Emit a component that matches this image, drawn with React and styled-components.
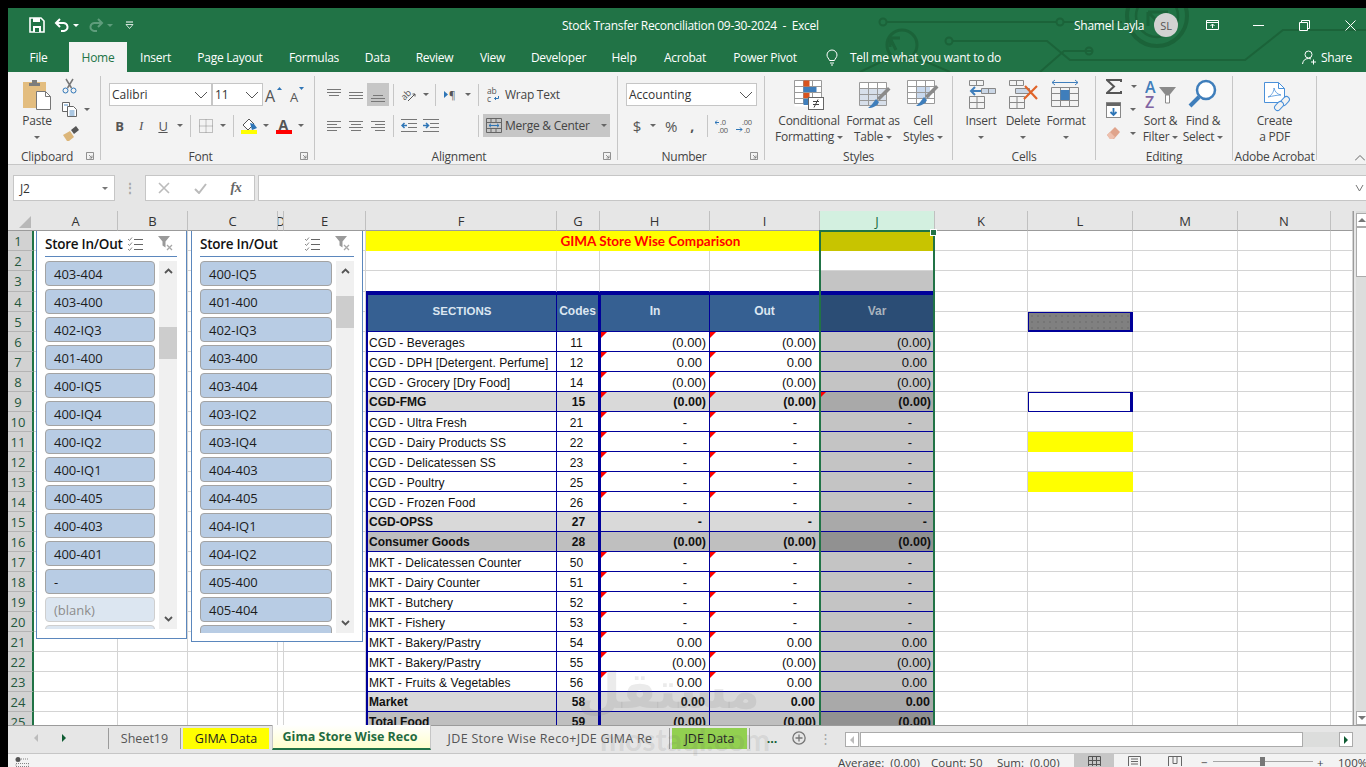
import React from 'react';
import styled, { createGlobalStyle } from 'styled-components';

const UI = '"Open Sans", "Noto Sans", sans-serif';
const CELL = '"Liberation Sans", Arial, sans-serif';
const GREEN = '#217346';
const NAVY = '#000099';

const GlobalStyle = createGlobalStyle`
  html, body {
    margin: 0;
    height: 100%;
    overflow: hidden;
    background: #000;
  }
  #root {
    height: 767px;
  }
`;

const Window = styled.div`
  position: relative;
  box-sizing: border-box;
  display: flex;
  flex-direction: column;
  width: 1366px;
  height: 767px;
  padding: 8px 0 0 8px;
  overflow: hidden;
  font-family: ${UI};
  font-size: 12px;
  letter-spacing: -0.25px;
  color: #444;
`;

/* ---------- title bar ---------- */

const Header = styled.div`
  position: relative;
  height: 64px;
  flex: none;
  background: ${GREEN};
  color: #fff;
`;

const CircuitArt = styled.svg`
  position: absolute;
  left: 0;
  top: 0;
  pointer-events: none;
`;

const TitleRow = styled.div`
  position: relative;
  display: flex;
  align-items: center;
  height: 34px;
`;

const Qat = styled.div`
  display: flex;
  align-items: center;
  flex: none;
  width: 554px;
  padding-left: 21px;
  box-sizing: border-box;
`;

const QatSlot = styled.span`
  display: flex;
  align-items: center;
  justify-content: center;
  gap: 3px;
  width: ${p => p.$w}px;
  margin-left: ${p => p.$ml || 0}px;
`;

const DocTitle = styled.div`
  flex: none;
  width: 512px;
  white-space: pre;
  letter-spacing: -0.3px;
`;

const UserName = styled.div`
  flex: none;
  width: 80px;
`;

const Avatar = styled.div`
  display: flex;
  align-items: center;
  justify-content: center;
  flex: none;
  width: 24px;
  height: 24px;
  border-radius: 50%;
  background: #d2d2d2;
  color: #555;
  font-size: 11px;
`;

const WinButton = styled.span`
  display: flex;
  justify-content: center;
  flex: none;
  width: 46px;
  margin-left: ${p => p.$ml || 0}px;
`;

const TabRow = styled.div`
  position: relative;
  display: flex;
  align-items: stretch;
  height: 30px;
`;

const RibbonTab = styled.div`
  display: flex;
  align-items: center;
  justify-content: center;
  flex: none;
  width: ${p => p.$w}px;
  background: ${p => (p.$active ? '#f3f3f3' : 'transparent')};
  color: ${p => (p.$active ? GREEN : '#fff')};
`;

const TellMe = styled.div`
  display: flex;
  align-items: center;
  flex: none;
  gap: 12px;
  margin-left: 16px;
  width: 476px;
`;

const Share = styled.div`
  display: flex;
  align-items: center;
  gap: 4px;
`;

/* ---------- ribbon ---------- */

const Ribbon = styled.div`
  display: flex;
  flex: none;
  box-sizing: border-box;
  height: 93px;
  background: #f3f3f3;
  border-bottom: 1px solid #c6c6c6;
  color: #444;
`;

const Group = styled.div`
  display: flex;
  flex-direction: column;
  flex: none;
  box-sizing: border-box;
  width: ${p => p.$w}px;
  height: 84px;
  margin-top: 4px;
  border-right: 1px solid #c6c6c6;
`;

const GroupBody = styled.div`
  display: flex;
  flex: none;
  height: 72px;
  padding-left: ${p => p.$pl || 0}px;
  justify-content: ${p => p.$justify || 'flex-start'};
`;

const GroupLabel = styled.div`
  display: flex;
  align-items: center;
  flex: none;
  height: 16px;
  white-space: nowrap;
`;

const LabelText = styled.span`
  flex: 1;
  text-align: center;
`;

const Launcher = styled.span`
  display: flex;
  width: 14px;
  flex: none;
`;

const Stack = styled.div`
  display: flex;
  flex-direction: column;
`;

const ToolRow = styled.div`
  display: flex;
  align-items: center;
  height: 23px;
  margin-top: ${p => p.$mt || 0}px;
`;

const ToolButton = styled.span`
  display: flex;
  align-items: center;
  justify-content: center;
  flex: none;
  width: ${p => p.$w}px;
  height: 23px;
  margin-left: ${p => p.$ml || 0}px;
  background: ${p => (p.$active ? '#c6c6c6' : 'transparent')};
  font-family: ${p => (p.$serif ? '"Liberation Serif", serif' : 'inherit')};
  font-size: ${p => p.$size || 13}px;
  font-weight: ${p => (p.$bold ? 700 : 400)};
  font-style: ${p => (p.$italic ? 'italic' : 'normal')};
  text-decoration: ${p => (p.$under ? 'underline' : 'none')};
  color: #555;
`;

const RowDivider = styled.span`
  flex: none;
  width: 1px;
  height: 22px;
  margin: 0 ${p => p.$r ?? 4}px 0 ${p => p.$l ?? 4}px;
  background: #c6c6c6;
`;

const Caret = styled.span`
  display: inline-block;
  flex: none;
  margin-left: ${p => p.$ml || 0}px;
  border-left: 3px solid transparent;
  border-right: 3px solid transparent;
  border-top: 3px solid ${p => p.$color || '#666'};
`;

const Select = styled.div`
  display: flex;
  align-items: center;
  justify-content: space-between;
  box-sizing: border-box;
  flex: none;
  width: ${p => p.$w}px;
  height: 23px;
  padding: 0 3px 0 2px;
  background: #fff;
  border: 1px solid #c6c6c6;
  color: #333;
  letter-spacing: 0;
`;

const WideTool = styled.div`
  display: flex;
  align-items: center;
  gap: ${p => p.$gap || 5}px;
  box-sizing: border-box;
  width: ${p => p.$w}px;
  height: 23px;
  padding-left: ${p => p.$pl || 4}px;
  background: ${p => (p.$active ? '#c6c6c6' : 'transparent')};
`;

const BigButton = styled.div`
  display: flex;
  flex-direction: column;
  align-items: center;
  flex: none;
  box-sizing: border-box;
  width: ${p => p.$w}px;
  padding-top: 3px;
  line-height: 16px;
  text-align: center;
  white-space: nowrap;
`;

const BigIcon = styled.span`
  display: flex;
  align-items: flex-start;
  justify-content: center;
  box-sizing: border-box;
  height: 34px;
  padding-left: ${p => p.$shift || 0}px;
  padding-top: ${p => p.$drop || 0}px;
`;

const BigLine = styled.span`
  display: flex;
  align-items: center;
  justify-content: center;
  gap: 3px;
  height: 16px;
`;

const SmallColumn = styled.div`
  display: flex;
  flex-direction: column;
  gap: 3.5px;
  width: ${p => p.$w}px;
  flex: none;
  margin-left: ${p => p.$ml || 0}px;
  padding-left: ${p => p.$pl || 0}px;
  box-sizing: border-box;
`;

const SmallItem = styled.span`
  display: flex;
  align-items: center;
  gap: ${p => p.$gap || 6}px;
  height: 20px;
`;

const RibbonEnd = styled.div`
  flex: 1;
  display: flex;
  align-items: flex-end;
  justify-content: flex-end;
  padding: 0 1px 3px 0;
`;

/* ---------- formula bar ---------- */

const FormulaBar = styled.div`
  display: flex;
  flex: none;
  align-items: center;
  height: 46px;
  padding-left: 5px;
  background: #e6e6e6;
`;

const NameBox = styled.div`
  display: flex;
  align-items: center;
  justify-content: space-between;
  box-sizing: border-box;
  width: 102px;
  height: 26px;
  padding: 0 6px;
  background: #fff;
  border: 1px solid #c6c6c6;
  color: #333;
`;

const Grip = styled.span`
  width: 30px;
  text-align: center;
  color: #a6a6a6;
  font-weight: 700;
  line-height: 1;
`;

const FormulaButtons = styled.div`
  display: flex;
  align-items: center;
  box-sizing: border-box;
  width: 110px;
  height: 26px;
  background: #fff;
  border: 1px solid #c6c6c6;
`;

const FormulaSlot = styled.span`
  display: flex;
  justify-content: center;
  width: 36px;
  color: #666;
  font-family: "Liberation Serif", serif;
  font-style: italic;
  font-weight: 700;
  font-size: 14px;
`;

const FormulaInput = styled.div`
  display: flex;
  align-items: center;
  justify-content: flex-end;
  box-sizing: border-box;
  flex: 1;
  height: 26px;
  margin-left: 3px;
  padding-right: 2px;
  background: #fff;
  border: 1px solid #c6c6c6;
  border-right: 0;
`;

/* ---------- sheet ---------- */

const Sheet = styled.div`
  position: relative;
  display: flex;
  flex: none;
  height: 514px;
  background: #e6e6e6;
`;

const SheetGrid = styled.div`
  display: grid;
  grid-template-columns: 26px ${p => p.$cols};
  grid-template-rows: 20px 20px 20px 21px repeat(22, 20px);
  flex: none;
  width: 1345px;
  height: 514px;
  overflow: hidden;
  background: #fff;
  border-right: 1px solid #9b9b9b;
  box-sizing: content-box;
`;

const Corner = styled.div`
  position: relative;
  background: #e6e6e6;
  border-bottom: 1px solid #9b9b9b;
  &::after {
    content: '';
    position: absolute;
    right: 3px;
    bottom: 2px;
    border-left: 12px solid transparent;
    border-bottom: 12px solid #b8b8b8;
  }
`;

const ColHead = styled.div`
  display: flex;
  align-items: center;
  justify-content: center;
  box-sizing: border-box;
  overflow: hidden;
  background: ${p => (p.$selected ? '#d3f0e0' : '#e6e6e6')};
  color: ${p => (p.$selected ? '#1b6b40' : '#333')};
  border-right: 1px solid #c0c0c0;
  border-bottom: 1px solid #9b9b9b;
  font-size: 13px;
  letter-spacing: 0;
`;

const RowHead = styled.div`
  display: flex;
  align-items: center;
  justify-content: center;
  box-sizing: border-box;
  padding-right: 4px;
  background: #d2d2d2;
  color: #24573c;
  border-right: 2px solid ${GREEN};
  border-bottom: 1px solid #b4b4b4;
  font-size: 13px;
  letter-spacing: 0;
`;

const Cell = styled.div`
  position: relative;
  display: flex;
  align-items: center;
  justify-content: ${p => p.$align || 'flex-start'};
  box-sizing: border-box;
  min-width: 0;
  overflow: hidden;
  white-space: nowrap;
  padding: ${p => p.$pad || 0};
  background: ${p => p.$bg || '#fff'};
  border-top: ${p => p.$top || 0};
  border-left: ${p => p.$left || 0};
  border-right: ${p => p.$right || '1px solid #d4d4d4'};
  border-bottom: ${p => p.$bottom || '1px solid #d4d4d4'};
  grid-column: ${p => (p.$colSpan ? `span ${p.$colSpan}` : 'auto')};
  grid-row: ${p => (p.$rowSpan ? `span ${p.$rowSpan}` : 'auto')};
  color: ${p => p.$color || '#111'};
  font-family: ${CELL};
  font-size: ${p => p.$size || 12}px;
  font-weight: ${p => (p.$bold ? 700 : 400)};
  letter-spacing: ${p => p.$track || 0}px;
`;

const MergedTitle = styled(Cell)`
  font-family: Lato, ${CELL};
  font-size: 13.5px;
  color: #ff0000;
`;

const CommentMark = styled.span`
  position: absolute;
  left: 0;
  top: 0;
  border-top: 6px solid #ff0000;
  border-right: 6px solid transparent;
`;

const Selection = styled.div`
  position: absolute;
  left: 811px;
  top: 19px;
  width: 116px;
  height: 495px;
  box-sizing: border-box;
  border: 2px solid ${GREEN};
  border-bottom: 0;
  pointer-events: none;
  &::after {
    content: '';
    position: absolute;
    right: -4px;
    top: -3px;
    width: 5px;
    height: 5px;
    background: ${GREEN};
    border: 1px solid #fff;
  }
`;

const VScroll = styled.div`
  display: flex;
  flex-direction: column;
  flex: none;
  box-sizing: border-box;
  width: 11px;
  height: 514px;
  margin-left: 2px;
  padding-top: 2px;
  background: #dcdddc;
`;

const ScrollArrow = styled.div`
  display: flex;
  align-items: center;
  justify-content: center;
  box-sizing: border-box;
  height: 14px;
  flex: none;
  background: #fff;
  border: 1px solid #ababab;
  margin-top: ${p => p.$mt || 0}px;
`;

const VThumb = styled.div`
  height: 50px;
  flex: none;
  box-sizing: border-box;
  background: #fff;
  border: 1px solid #ababab;
`;

const Triangle = styled.span`
  border-left: 4px solid transparent;
  border-right: 4px solid transparent;
  border-${p => (p.$up ? 'bottom' : 'top')}: 4px solid #777;
`;

/* ---------- slicers ---------- */

const Slicer = styled.div`
  position: absolute;
  left: ${p => p.$left}px;
  top: 20px;
  box-sizing: border-box;
  width: ${p => p.$w}px;
  height: ${p => p.$h}px;
  padding: 0 ${p => p.$pr}px 0 8px;
  background: #fff;
  border: 1px solid #5b87bd;
  border-top: 0;
`;

const SlicerHead = styled.div`
  display: flex;
  align-items: center;
  box-sizing: border-box;
  height: 26px;
  border-bottom: 1px solid #5b87bd;
`;

const SlicerTitle = styled.span`
  flex: none;
  width: ${p => p.$w}px;
  font-size: 13.5px;
  font-weight: 600;
  color: #111;
  white-space: nowrap;
`;

const SlicerTool = styled.span`
  display: flex;
  width: ${p => p.$w}px;
`;

const SlicerBody = styled.div`
  display: flex;
  gap: 4px;
  height: ${p => p.$h}px;
  margin-top: 4px;
`;

const ItemList = styled.div`
  display: flex;
  flex-direction: column;
  gap: 3px;
  flex: 1;
  overflow: hidden;
`;

const SlicerItem = styled.div`
  display: flex;
  align-items: center;
  flex: none;
  box-sizing: border-box;
  height: 25px;
  padding-left: 8px;
  background: ${p => (p.$dim ? '#dce6f1' : '#b8cce4')};
  border: 1px solid ${p => (p.$dim ? '#cfcfcf' : '#a3a3a3')};
  border-radius: 4px;
  color: ${p => (p.$dim ? '#8c8c8c' : '#1c1c1c')};
  font-size: 13px;
  letter-spacing: 0;
`;

const Track = styled.div`
  display: flex;
  flex-direction: column;
  align-items: center;
  flex: none;
  width: 18px;
  background: #f0f0f0;
`;

const TrackChevron = styled.span`
  display: flex;
  align-items: center;
  justify-content: center;
  flex: none;
  height: 20px;
`;

const TrackGap = styled.span`
  flex: ${p => (p.$h ? 'none' : 1)};
  height: ${p => p.$h || 0}px;
`;

const TrackThumb = styled.span`
  flex: none;
  width: 100%;
  height: 32px;
  background: #cdcdcd;
`;

/* ---------- bottom bars ---------- */

const TabsBar = styled.div`
  display: flex;
  align-items: flex-start;
  flex: none;
  box-sizing: border-box;
  height: 28px;
  background: #e6e6e6;
  border-top: 1px solid #9b9b9b;
  font-size: 12.5px;
  letter-spacing: 0;
`;

const NavArrows = styled.div`
  display: flex;
  align-items: center;
  flex: none;
  height: 24px;
  width: 100px;
  padding-left: 26px;
  gap: 24px;
  box-sizing: border-box;
`;

const NavArrow = styled.span`
  border-top: 4px solid transparent;
  border-bottom: 4px solid transparent;
  border-left: ${p => (p.$right ? `4px solid #0f5c33` : 0)};
  border-right: ${p => (p.$right ? 0 : '4px solid #bcbcbc')};
`;

const TabDivider = styled.span`
  flex: none;
  width: 1px;
  height: 21px;
  margin: 2px ${p => p.$mr ?? 2}px 0 ${p => p.$ml ?? 0}px;
  background: ${p => (p.$clear ? 'transparent' : '#9b9b9b')};
`;

const SheetTab = styled.div`
  display: flex;
  align-items: center;
  justify-content: center;
  flex: none;
  box-sizing: border-box;
  width: ${p => p.$w}px;
  height: ${p => (p.$active ? 25 : 21)}px;
  margin-top: ${p => (p.$active ? -1 : 2)}px;
  padding-right: ${p => (p.$active ? 3 : 0)}px;
  background: ${p => p.$bg || 'transparent'};
  color: ${p => (p.$active ? '#1f6b41' : p.$plain ? '#555' : '#222')};
  font-weight: ${p => (p.$active ? 700 : 400)};
  letter-spacing: ${p => p.$track || 0}px;
  border-left: ${p => (p.$active ? '1px solid #c6c6c6' : 0)};
  border-right: ${p => (p.$active ? '1px solid #c6c6c6' : 0)};
  border-bottom: ${p => (p.$active ? `2px solid ${GREEN}` : 0)};
  white-space: nowrap;
  overflow: hidden;
`;

const TabExtra = styled.span`
  display: flex;
  justify-content: center;
  align-items: center;
  flex: none;
  height: 24px;
  width: ${p => p.$w}px;
  color: ${p => p.$color || '#666'};
  font-weight: ${p => (p.$bold ? 700 : 400)};
`;

const HScroll = styled.div`
  display: flex;
  flex: none;
  width: 508px;
  height: 15px;
  margin-top: 6px;
  background: #dcdddc;
`;

const HArrow = styled.span`
  display: flex;
  align-items: center;
  justify-content: center;
  box-sizing: border-box;
  width: ${p => p.$w}px;
  flex: none;
  background: #fff;
  border: 1px solid #ababab;
`;

const HThumb = styled.span`
  flex: none;
  box-sizing: border-box;
  width: 443px;
  margin-left: 1px;
  background: #fff;
  border: 1px solid #ababab;
`;

const HTrack = styled.span`
  flex: 1;
`;

const StatusBar = styled.div`
  display: flex;
  align-items: flex-start;
  flex: none;
  box-sizing: border-box;
  height: 14px;
  background: #f3f3f3;
  border-top: 1px solid #c6c6c6;
  font-size: 11.5px;
  letter-spacing: 0;
  line-height: 18px;
  white-space: pre;
`;

const StatusText = styled.span`
  flex: none;
  width: ${p => p.$w}px;
  margin-left: ${p => p.$ml || 0}px;
`;

const MacroSlot = styled.span`
  display: flex;
  flex: none;
  width: 823px;
  margin-left: 7px;
  padding-top: 3px;
`;

const ViewButton = styled.span`
  display: flex;
  justify-content: center;
  padding-top: 2px;
  flex: none;
  width: ${p => p.$w}px;
  height: 14px;
  background: ${p => (p.$active ? '#c6c6c6' : 'transparent')};
`;

const ZoomTrack = styled.span`
  position: relative;
  flex: none;
  width: 100px;
  height: 1px;
  margin: 7px 4px 0 2px;
  background: #a6a6a6;
`;

const ZoomThumb = styled.span`
  position: absolute;
  left: 47px;
  top: -4px;
  width: 5px;
  height: 9px;
  background: #777;
`;

const Watermark = styled.div`
  position: absolute;
  left: 590px;
  top: 660px;
  width: 190px;
  text-align: center;
  color: rgba(110, 110, 110, 0.14);
  pointer-events: none;
  letter-spacing: 0;
`;

const WatermarkAr = styled.div`
  padding-right: 20px;
  font-family: "DejaVu Sans", sans-serif;
  font-weight: 700;
  font-size: 50px;
  line-height: 62px;
`;

const WatermarkEn = styled.div`
  font-family: Lato, sans-serif;
  font-weight: 700;
  font-size: 30px;
  line-height: 34px;
`;

/* ---------- icons ---------- */

const Svg = ({ w, h, children }) => (
  <svg width={w} height={h} viewBox={`0 0 ${w} ${h}`} fill="none">
    {children}
  </svg>
);

const Circuit = () => (
  <CircuitArt width="1358" height="64" viewBox="8 8 1358 64" fill="none" stroke="#1b6339" strokeWidth="2">
    <circle cx="883" cy="22" r="3.5" />
    <path d="M887 22H1056M1064 22H1122" />
    <circle cx="1060" cy="22" r="3.5" />
    <circle cx="902" cy="45" r="15" strokeWidth="3" />
    <path d="M896 50l-6-12M890 38h10M890 38v9" strokeWidth="3" />
    <path d="M953 41H1047L1070 60H1245L1283 30H1366" />
    <circle cx="949" cy="41" r="3.5" />
    <circle cx="1089" cy="51" r="3.5" />
    <circle cx="1157" cy="16" r="30" strokeWidth="4" />
    <circle cx="1157" cy="16" r="21" strokeWidth="2.5" />
    <path d="M1148 12h20M1148 12v14M1148 12l16 16" strokeWidth="3" />
    <path d="M1092 51h-28L1040 72M950 72l-28-12H885M860 72l25-12" />
  </CircuitArt>
);

const SaveIcon = () => (
  <Svg w={16} h={16}>
    <path d="M1 1h11l3 3v11H1z" stroke="#fff" strokeWidth="1.6" />
    <path d="M4 1h7v4H4zM4 9h8v6H4z" fill="#fff" />
    <path d="M6 11h4v4H6z" fill={GREEN} />
  </Svg>
);

const UndoIcon = ({ color, flip }) => (
  <svg width="16" height="14" viewBox="0 0 16 14" fill="none" transform={flip ? 'scale(-1 1)' : undefined}>
    <path d="M6 1L2 5l4 4" stroke={color} strokeWidth="2" />
    <path d="M2 5h7a4 4 0 0 1 1 8H7" stroke={color} strokeWidth="2" />
  </svg>
);

const CustomizeIcon = () => (
  <Svg w={9} h={8}>
    <path d="M1 1h7" stroke="#fff" />
    <path d="M1 3.5h7L4.5 7.5z" stroke="#fff" strokeWidth=".8" />
  </Svg>
);

const DisplayIcon = () => (
  <Svg w={13} h={10}>
    <path d="M.5.5h12v9H.5zM.5 2.5h12M6.5 8V4M4.5 6l2-2 2 2" stroke="#fff" />
  </Svg>
);

const MinIcon = () => <Svg w={11} h={11}><path d="M0 5.5h11" stroke="#fff" /></Svg>;
const RestoreIcon = () => (
  <Svg w={11} h={11}>
    <path d="M.5 2.5h8v8h-8zM2.5 2.5v-2h8v8h-2" stroke="#fff" />
  </Svg>
);
const CloseIcon = () => <Svg w={11} h={11}><path d="M.5.5l10 10M10.5.5l-10 10" stroke="#fff" /></Svg>;

const BulbIcon = () => (
  <Svg w={12} h={17}>
    <path d="M3.5 11.5C3 9.5 1 8.5 1 6a5 5 0 0 1 10 0c0 2.5-2 3.5-2.5 5.5zM4 14h4M5 16h2" stroke="#fff" />
  </Svg>
);

const ShareIcon = () => (
  <Svg w={15} h={15}>
    <circle cx="6.5" cy="4.5" r="3.5" stroke="#fff" />
    <path d="M.5 14c.5-3.5 2.5-5.5 6-5.5 1 0 2 .2 2.5.5M11.5 9.5v5M9 12h5" stroke="#fff" />
  </Svg>
);

const PasteIcon = () => (
  <Svg w={30} h={31}>
    <rect x="1" y="3" width="23" height="26" fill="#e3bd7f" />
    <path d="M7 4h11v3H7z" fill="#7c7c7c" />
    <path d="M10 1h5v3h-5z" fill="#7c7c7c" />
    <path d="M14.5 12.5h9l5 5v13h-14z" fill="#fff" stroke="#777" />
    <path d="M23.5 12.5v5h5" stroke="#777" />
  </Svg>
);

const CutIcon = () => (
  <Svg w={15} h={16}>
    <path d="M4 1l5.5 9M11 1L5.5 10" stroke="#777" strokeWidth="1.5" />
    <circle cx="3.5" cy="12.5" r="2.5" stroke="#2e75b6" />
    <circle cx="11.5" cy="12.5" r="2.5" stroke="#2e75b6" />
  </Svg>
);

const CopyIcon = () => (
  <Svg w={16} h={15}>
    <path d="M.5.5h7v9h-7z" fill="#fff" stroke="#666" />
    <path d="M5.5 4.5h6l3 3v7h-9z" fill="#fff" stroke="#666" />
    <path d="M7.5 9h5M7.5 11h5M7.5 13h5M2 3h4" stroke="#2e75b6" strokeWidth=".8" />
  </Svg>
);

const PainterIcon = () => (
  <Svg w={17} h={15}>
    <path d="M1 9l7-4 4 6-5 4H5z" fill="#dcb67a" />
    <path d="M9 4l5-4 3 4-5 4z" fill="#555" />
  </Svg>
);

const LauncherIcon = () => (
  <Svg w={8} h={8}>
    <path d="M.5 7.5v-7h7v7zM3 3l3 3M6 3.5V6H3.5" stroke="#777" strokeWidth=".8" />
  </Svg>
);

const ChevronDown = ({ color = '#555', w = 14 }) => (
  <Svg w={w} h={8}>
    <path d={`M1 1l${(w - 2) / 2} 6 ${(w - 2) / 2}-6`} stroke={color} />
  </Svg>
);

const SizeA = ({ size, up }) => (
  <Svg w={20} h={20}>
    <text x={up ? 1 : 4} y="17" fontFamily={UI} fontSize={size} fill="#555">A</text>
    <path d={up ? 'M13 5h5l-2.5-3z' : 'M13 2h5l-2.5 3z'} fill="#2e75b6" />
  </Svg>
);

const BorderIcon = () => (
  <Svg w={14} h={14}>
    <path d="M.5.5h13v13H.5zM7 .5v13M.5 7h13" stroke="#888" strokeDasharray="1 1" />
  </Svg>
);

const FillColorIcon = () => (
  <Svg w={18} h={18}>
    <path d="M8 2L2 8l5 5 6-6z" fill="#fff" stroke="#555" />
    <path d="M9 6l4 1 3 4-5 2z" fill="#2e75b6" />
    <rect y="13" width="16" height="4" fill="#ffff00" />
  </Svg>
);

const FontColorIcon = () => (
  <Svg w={16} h={18}>
    <text x="2.5" y="12.5" fontFamily={UI} fontSize="14" fontWeight="700" fill="#555">A</text>
    <rect y="13" width="16" height="4" fill="#ff0000" />
  </Svg>
);

const lineSets = {
  top: [[0, 14, 2], [0, 14, 5], [2, 12, 8]],
  middle: [[0, 14, 5], [0, 14, 8], [0, 14, 11]],
  bottom: [[2, 12, 8], [0, 14, 11], [0, 14, 14]],
  left: [[0, 14, 3], [0, 10, 6], [0, 14, 9], [0, 10, 12]],
  center: [[0, 14, 3], [2, 12, 6], [0, 14, 9], [2, 12, 12]],
  right: [[0, 14, 3], [4, 14, 6], [0, 14, 9], [4, 14, 12]],
};

const LinesIcon = ({ kind }) => (
  <Svg w={14} h={16}>
    {lineSets[kind].map(([a, b, y]) => (
      <path key={y} d={`M${a} ${y + 0.5}H${b}`} stroke="#777" />
    ))}
  </Svg>
);

const OrientationIcon = () => (
  <Svg w={16} h={16}>
    <text x="0" y="11" fontFamily={UI} fontSize="9" fill="#555" transform="rotate(-45 5 8)">ab</text>
    <path d="M7 14L14 7M11.5 7H14v2.5" stroke="#555" />
  </Svg>
);

const RtlIcon = () => (
  <Svg w={14} h={12}>
    <path d="M0 2l4 3.5L0 9z" fill="#2e75b6" />
    <text x="5" y="10" fontFamily={UI} fontSize="10" fill="#555">¶</text>
  </Svg>
);

const IndentIcon = ({ right }) => (
  <Svg w={16} h={14}>
    <path d="M0 .5h16M7 4.5h9M7 8.5h9M0 12.5h16" stroke="#777" />
    <path d={right ? 'M0 6.5h5M3 4l2.5 2.5L3 9' : 'M6 6.5H1M3.5 4L1 6.5 3.5 9'} stroke="#2e75b6" strokeWidth="1.5" />
  </Svg>
);

const WrapIcon = () => (
  <Svg w={13} h={15}>
    <text x="0" y="7" fontFamily={UI} fontSize="8.5" fill="#555">ab</text>
    <text x="0" y="15" fontFamily={UI} fontSize="8.5" fill="#555">c</text>
    <path d="M11.5 9v2.5H7.5M9 10l-1.5 1.5L9 13" stroke="#2e75b6" />
  </Svg>
);

const MergeIcon = () => (
  <Svg w={16} h={15}>
    <path d="M.5.5h15v14H.5zM.5 4.5h15M.5 10.5h15M5 .5v4M10 .5v4M5 10.5v4M10 10.5v4" stroke="#666" />
    <path d="M3 7.5h10M5 5.8L3 7.5l2 1.7M11 5.8l2 1.7-2 1.7" stroke="#2e75b6" />
  </Svg>
);

const DecimalIcon = ({ more }) => (
  <Svg w={17} h={14}>
    <text x={more ? 6 : 5} y="6" fontFamily={UI} fontSize="7.5" fill="#555">{more ? '.00' : '.0'}</text>
    <text x={more ? 8 : 3} y="13.5" fontFamily={UI} fontSize="7.5" fill="#555">{more ? '.0' : '.00'}</text>
    {more ? (
      <path d="M0 10.5h6M4 8.5l2 2-2 2" stroke="#2e75b6" />
    ) : (
      <path d="M4 3.5H0M2 1.5l-2 2 2 2" stroke="#2e75b6" />
    )}
  </Svg>
);

const TableGrid = () => (
  <path d="M.5.5h27v23H.5zM9.5.5v23M18.5.5v23M.5 6.5h27M.5 12.5h27M.5 18.5h27" stroke="#999" />
);

const ConditionalIcon = () => (
  <Svg w={30} h={30}>
    <rect x=".5" y=".5" width="27" height="26" fill="#fff" />
    <TableGrid />
    <rect x="9.5" y=".5" width="6" height="6" fill="#d9541e" />
    <rect x="9.5" y="7" width="13" height="5" fill="#3f7ebb" />
    <rect x="9.5" y="13" width="6" height="5" fill="#d9541e" />
    <rect x="9.5" y="19" width="6" height="6" fill="#3f7ebb" />
    <rect x="14.5" y="17.5" width="15" height="12" fill="#fff" stroke="#666" />
    <path d="M19 21.5h6M19 24.5h6M24 19.5l-4 8" stroke="#444" />
  </Svg>
);

const TableBrushIcon = ({ cell }) => (
  <Svg w={32} h={28}>
    <rect x=".5" y=".5" width="27" height="23" fill="#fff" />
    <rect x={cell ? 9 : 1} y={cell ? 6 : 6} width={cell ? 14 : 26} height={cell ? 12 : 17} fill={cell ? '#c9d9ee' : '#d7dfea'} />
    <TableGrid />
    <path d="M29 5l2.500 2.500-11 11-2.500-2.500z" fill="#8a8a8a" />
    <path d="M17 17l3 3c-2 4-6 6-11 6 3-2 5-5 8-9z" fill="#3f7ebb" />
  </Svg>
);

const InsertIcon = () => (
  <Svg w={28} h={30}>
    <path d="M.5.5h14v5H.5zM7.5.5v5M.5 16.5h15v12H.5zM8 16.5v12M.5 22.5h15" stroke="#888" />
    <path d="M12 11H2M6 7l-4 4 4 4" stroke="#3f7ebb" strokeWidth="2" />
    <path d="M12.5 8.5h14v5h-14zM19.5 8.5v5" fill="#cbd7e6" stroke="#888" />
  </Svg>
);

const DeleteIcon = () => (
  <Svg w={32} h={30}>
    <path d="M.5.5h14v5H.5zM7.5.5v5M.5 16.5h15v12H.5zM8 16.5v12M.5 22.5h15" stroke="#888" />
    <path d="M6.5 8.5h14v5h-14z" fill="#cbd7e6" stroke="#888" />
    <path d="M16 6l12 13M28 6L15 19" stroke="#e0642a" strokeWidth="2.2" />
  </Svg>
);

const FormatIcon = () => (
  <Svg w={30} h={30}>
    <path d="M1 3.5h26M4 1L1 3.5 4 6M24 1l3 2.5L24 6" stroke="#3f7ebb" />
    <path d="M.5 8.5h27v19h-27zM9.5 8.5v19M18.5 8.5v19M.5 14.5h27M.5 21.5h27" stroke="#888" />
    <rect x="9.5" y="11" width="9" height="10" fill="#3f7ebb" />
  </Svg>
);

const SigmaIcon = () => (
  <Svg w={16} h={15}>
    <path d="M15 3V1H1l7 6.5L1 14h14v-2" stroke="#555" strokeWidth="2" />
  </Svg>
);

const FillDownIcon = () => (
  <Svg w={15} h={16}>
    <rect x=".5" y=".5" width="14" height="15" fill="#fff" stroke="#888" />
    <path d="M.5 1h14v3H.5z" fill="#666" />
    <path d="M7.5 6v7M4.5 10l3 3 3-3" stroke="#2e75b6" strokeWidth="1.8" />
  </Svg>
);

const EraserIcon = () => (
  <Svg w={15} h={14}>
    <path d="M1 9l8-8 5 5-6 7H4z" fill="#e0a48c" />
    <path d="M1 9l3-3 5 5-2 2H4z" fill="#eec0ae" />
  </Svg>
);

const SortFilterIcon = () => (
  <Svg w={32} h={30}>
    <text x="0" y="14" fontFamily={UI} fontSize="16" fontWeight="600" fill="#3f7ebb">A</text>
    <text x="0" y="29" fontFamily={UI} fontSize="16" fontWeight="600" fill="#8064a2">Z</text>
    <path d="M14 8h17l-6.5 8v8h-4v-8z" fill="#8a8a8a" />
    <path d="M20.5 16h4v8h-4z" fill="#fff" stroke="#8a8a8a" />
  </Svg>
);

const FindIcon = () => (
  <Svg w={30} h={30}>
    <circle cx="18" cy="11" r="9" fill="#fff" stroke="#3f7ebb" strokeWidth="2.5" />
    <path d="M11 18L2 27" stroke="#3f7ebb" strokeWidth="4" />
  </Svg>
);

const PdfIcon = () => (
  <Svg w={28} h={30}>
    <path d="M.5.5h14l6 6v14h-20z" fill="#fff" stroke="#4a90d9" />
    <path d="M14.5.5v6h6" stroke="#4a90d9" />
    <path d="M4 15c3-1 6-5 6-9 1 4 3 6 7 7-4 0-8 1-13 2z" stroke="#4a90d9" strokeWidth=".8" />
    <rect x="18" y="14" width="6" height="10" rx="3" transform="rotate(45 21 19)" fill="#f3f3f3" stroke="#4a90d9" />
    <rect x="12" y="19" width="6" height="10" rx="3" transform="rotate(45 15 24)" fill="#f3f3f3" stroke="#4a90d9" />
  </Svg>
);

const MultiSelectIcon = () => (
  <Svg w={16} h={14}>
    <path d="M1 2l1.5 1.5L5 .5M1 7l1.5 1.5L5 5.5M1 12l1.5 1.5L5 10.5" stroke="#888" />
    <path d="M7 2.5h9M7 7.5h9M7 12.5h9" stroke="#666" />
  </Svg>
);

const ClearFilterIcon = () => (
  <Svg w={16} h={15}>
    <path d="M0 0h12L7.5 5.5v6l-3-2V5.5z" fill="#9a9a9a" />
    <path d="M9 9l5 5M14 9l-5 5" stroke="#a8a8a8" strokeWidth="1.3" />
  </Svg>
);

const TrackArrow = ({ down }) => (
  <Svg w={9} h={6}>
    <path d={down ? 'M1 1l3.5 3.5L8 1' : 'M1 5l3.5-3.5L8 5'} stroke="#555" strokeWidth="1.8" />
  </Svg>
);

const CrossIcon = () => <Svg w={12} h={12}><path d="M1 1l10 10M11 1L1 11" stroke="#bbb" strokeWidth="1.6" /></Svg>;
const CheckIcon = () => <Svg w={13} h={11}><path d="M1 6l4 4 7-9" stroke="#bbb" strokeWidth="2" /></Svg>;

const MacroIcon = () => (
  <Svg w={14} h={10}>
    <circle cx="3" cy="2.5" r="2.5" fill="#555" />
    <path d="M6 2h8M1 6.5h13v3H1z" stroke="#666" strokeWidth=".8" strokeDasharray="1 1" />
  </Svg>
);

const NormalViewIcon = () => <Svg w={13} h={10}><path d="M.5.5h12v12H.5zM4.5.5v12M8.5.5v12M.5 4.5h12M.5 8.5h12" stroke="#555" /></Svg>;
const PageViewIcon = () => <Svg w={13} h={10}><path d="M.5.5h12v12H.5zM3 3h7M3 5.5h7M3 8h7" stroke="#666" /></Svg>;
const BreakViewIcon = () => <Svg w={14} h={10}><path d="M.5.5h13v12H.5zM5 .5v7h4v-7" stroke="#666" /></Svg>;

const PlusCircleIcon = () => (
  <Svg w={16} h={16}>
    <circle cx="8" cy="8" r="7" stroke="#777" strokeWidth="1.5" />
    <path d="M4 8h8M8 4v8" stroke="#777" strokeWidth="1.5" />
  </Svg>
);

/* ---------- data ---------- */

const menuTabs = [
  ['File', 61], ['Home', 58], ['Insert', 57], ['Page Layout', 92], ['Formulas', 76], ['Data', 51],
  ['Review', 63], ['View', 53], ['Developer', 79], ['Help', 52], ['Acrobat', 70], ['Power Pivot', 90],
];

const columns = [
  ['A', 84], ['B', 70], ['C', 90], ['D', 6], ['E', 82], ['F', 191], ['G', 43], ['H', 110],
  ['I', 110], ['J', 115], ['K', 93], ['L', 105], ['M', 105], ['N', 93], ['', 22],
];

const storeOne = ['403-404', '403-400', '402-IQ3', '401-400', '400-IQ5', '400-IQ4', '400-IQ2', '400-IQ1', '400-405', '400-403', '400-401', '-'];
const storeTwo = ['400-IQ5', '401-400', '402-IQ3', '403-400', '403-404', '403-IQ2', '403-IQ4', '404-403', '404-405', '404-IQ1', '404-IQ2', '405-400', '405-404', ''];

// row: label, code, value kind, tone
const tableRows = {
  6: ['CGD - Beverages', 11, 'neg', 'plain'],
  7: ['CGD - DPH [Detergent. Perfume]', 12, 'pos', 'plain'],
  8: ['CGD - Grocery [Dry Food]', 14, 'neg', 'plain'],
  9: ['CGD-FMG', 15, 'neg', 'light'],
  10: ['CGD - Ultra Fresh', 21, 'dash', 'plain'],
  11: ['CGD - Dairy Products SS', 22, 'dash', 'plain'],
  12: ['CGD - Delicatessen SS', 23, 'dash', 'plain'],
  13: ['CGD - Poultry', 25, 'dash', 'plain'],
  14: ['CGD - Frozen Food', 26, 'dash', 'plain'],
  15: ['CGD-OPSS', 27, 'dash', 'light'],
  16: ['Consumer Goods', 28, 'neg', 'mid'],
  17: ['MKT - Delicatessen Counter', 50, 'dash', 'plain'],
  18: ['MKT - Dairy Counter', 51, 'dash', 'plain'],
  19: ['MKT - Butchery', 52, 'dash', 'plain'],
  20: ['MKT - Fishery', 53, 'dash', 'plain'],
  21: ['MKT - Bakery/Pastry', 54, 'pos', 'plain'],
  22: ['MKT - Bakery/Pastry', 55, 'neg', 'plain'],
  23: ['MKT - Fruits & Vegetables', 56, 'pos', 'plain'],
  24: ['Market', 58, 'pos', 'light'],
  25: ['Total Food', 59, 'neg', 'mid'],
};

const tones = {
  plain: { bg: '#fff', sel: '#c4c4c4' },
  light: { bg: '#d9d9d9', sel: '#a9a9a9' },
  mid: { bg: '#bfbfbf', sel: '#919191' },
};

const valueText = { neg: '(0.00)', pos: '0.00', dash: '-' };
const thin = `1px solid ${NAVY}`;

const valuePad = (kind, bold) => {
  const top = bold ? 0 : 2;
  if (kind === 'neg') return `${top}px 3px 0 0`;
  if (kind === 'pos') return `${top}px ${bold ? 4 : 7}px 0 0`;
  return `${top}px ${bold ? 7 : 22}px 0 0`;
};

const tableRowCells = r => {
  const [label, code, kind, tone] = tableRows[r];
  const { bg, sel } = tones[tone];
  const bold = tone !== 'plain';
  const marked = tone === 'plain' || r === 9;
  const pad = valuePad(kind, bold);
  const size = bold ? 12.5 : 13;
  return [
    <Cell key={`F${r}`} $bg={bg} $bold={bold} $track={bold ? 0 : 0.07} $left={`2px solid ${NAVY}`} $right={thin} $bottom={thin} $pad={bold ? '1px 0 0 1px' : '2px 0 0 1px'}>{label}</Cell>,
    <Cell key={`G${r}`} $bg={bg} $bold={bold} $align="center" $right={`2px solid ${NAVY}`} $bottom={thin} $pad={bold ? '1px 0 0 2px' : '2px 2px 0 0'}>{code}</Cell>,
    <Cell key={`H${r}`} $bg={bg} $bold={bold} $size={size} $align="flex-end" $left={thin} $right={thin} $bottom={thin} $pad={pad}>
      {marked && <CommentMark />}{valueText[kind]}
    </Cell>,
    <Cell key={`I${r}`} $bg={bg} $bold={bold} $size={size} $align="flex-end" $right={thin} $bottom={thin} $pad={pad}>
      {marked && <CommentMark />}{valueText[kind]}
    </Cell>,
    <Cell key={`J${r}`} $bg={sel} $bold={bold} $size={size} $align="flex-end" $right={thin} $bottom={thin} $pad={pad}>
      {r === 9 && <CommentMark />}{valueText[kind]}
    </Cell>,
  ];
};

const headerCell = (key, text, props) => (
  <Cell key={key} $rowSpan={2} $bold $align="center" $bg="#366092" $color="#dce6f1" $top={`3px solid ${NAVY}`} $bottom={thin} $right={thin} $pad="0 0 4px 0" {...props}>
    {text}
  </Cell>
);

const sideCell = (r, id) => {
  const key = `${id}${r}`;
  if (id === 'L' && r === 5) {
    return (
      <Cell
        key={key}
        $bg="radial-gradient(#727272 16%, transparent 20%) 0 0 / 6px 6px, #808080"
        $top={thin}
        $left={thin}
        $right={`3px solid ${NAVY}`}
        $bottom={`2px solid ${NAVY}`}
      />
    );
  }
  if (id === 'L' && r === 9) {
    return <Cell key={key} $top={thin} $left={thin} $right={`3px solid ${NAVY}`} $bottom={thin} />;
  }
  if (id === 'L' && (r === 11 || r === 13)) {
    return <Cell key={key} $bg="#ffff00" $right="1px solid #ffff00" $bottom="1px solid #ffff00" />;
  }
  return <Cell key={key} />;
};

const SheetCells = () => {
  const cells = [];
  for (let r = 1; r <= 25; r += 1) {
    cells.push(<RowHead key={`row${r}`}>{r}</RowHead>);
    columns.slice(0, 5).forEach(([id]) => cells.push(<Cell key={`${id}${r}`} />));

    if (r === 1) {
      cells.push(
        <MergedTitle
          key="title"
          $colSpan={5}
          $bold
          $align="center"
          $bg="linear-gradient(90deg, #ffff00 0 454px, #c8c400 454px)"
          $right="0"
          $bottom="1px solid transparent"
        >
          GIMA Store Wise Comparison
        </MergedTitle>,
      );
    } else if (r === 2 || r === 3) {
      ['F', 'G', 'H', 'I'].forEach(id => cells.push(<Cell key={`${id}${r}`} $bottom={r === 3 ? thin : undefined} />));
      cells.push(<Cell key={`J${r}`} $bg={r === 3 ? '#c4c4c4' : '#fff'} $bottom={r === 3 ? thin : undefined} />);
    } else if (r === 4) {
      cells.push(headerCell('sections', 'SECTIONS', { $left: `2px solid ${NAVY}`, $size: 11.5 }));
      cells.push(headerCell('codes', 'Codes', { $right: `2px solid ${NAVY}` }));
      cells.push(headerCell('in', 'In', { $left: thin }));
      cells.push(headerCell('out', 'Out'));
      cells.push(headerCell('var', 'Var', { $bg: '#2b4d75', $color: '#a9b3be' }));
    } else if (r >= 6) {
      cells.push(...tableRowCells(r));
    }

    columns.slice(10).forEach(([id], i) => cells.push(sideCell(r, id || `O${i}`)));
  }
  return cells;
};

const StoreSlicer = ({ left, w, h, pr, titleW, bodyH, thumbGap, items, tail }) => (
  <Slicer $left={left} $w={w} $h={h} $pr={pr}>
    <SlicerHead>
      <SlicerTitle $w={titleW}>Store In/Out</SlicerTitle>
      <SlicerTool $w={31}><MultiSelectIcon /></SlicerTool>
      <SlicerTool $w={16}><ClearFilterIcon /></SlicerTool>
    </SlicerHead>
    <SlicerBody $h={bodyH}>
      <ItemList>
        {items.map((item, i) => <SlicerItem key={i}>{item}</SlicerItem>)}
        {tail}
      </ItemList>
      <Track>
        <TrackChevron><TrackArrow /></TrackChevron>
        <TrackGap $h={thumbGap} />
        <TrackThumb />
        <TrackGap />
        <TrackChevron><TrackArrow down /></TrackChevron>
      </Track>
    </SlicerBody>
  </Slicer>
);

const RibbonBar = () => (
  <Ribbon>
    <Group $w={93}>
      <GroupBody>
        <BigButton $w={58}>
          <BigIcon><PasteIcon /></BigIcon>
          <BigLine>Paste</BigLine>
          <BigLine><Caret /></BigLine>
        </BigButton>
        <SmallColumn $w={34} $ml={-4}>
          <SmallItem><CutIcon /></SmallItem>
          <SmallItem><CopyIcon /><Caret /></SmallItem>
          <SmallItem><PainterIcon /></SmallItem>
        </SmallColumn>
      </GroupBody>
      <GroupLabel><LabelText>Clipboard</LabelText><Launcher><LauncherIcon /></Launcher></GroupLabel>
    </Group>

    <Group $w={214}>
      <GroupBody $pl={8}>
        <Stack>
          <ToolRow $mt={7}>
            <Select $w={103}>Calibri<ChevronDown /></Select>
            <Select $w={51}>11<ChevronDown /></Select>
            <ToolButton $w={22}><SizeA size={16} up /></ToolButton>
            <ToolButton $w={22}><SizeA size={13} /></ToolButton>
          </ToolRow>
          <ToolRow $mt={8}>
            <ToolButton $w={21} $bold $size={13}>B</ToolButton>
            <ToolButton $w={22} $italic $serif $size={13}>I</ToolButton>
            <ToolButton $w={22} $under $size={13}>U</ToolButton>
            <ToolButton $w={12}><Caret /></ToolButton>
            <RowDivider />
            <ToolButton $w={22}><BorderIcon /></ToolButton>
            <ToolButton $w={12}><Caret /></ToolButton>
            <RowDivider />
            <ToolButton $w={24}><FillColorIcon /></ToolButton>
            <ToolButton $w={8}><Caret /></ToolButton>
            <ToolButton $w={28}><FontColorIcon /></ToolButton>
            <ToolButton $w={6}><Caret /></ToolButton>
          </ToolRow>
        </Stack>
      </GroupBody>
      <GroupLabel><LabelText>Font</LabelText><Launcher><LauncherIcon /></Launcher></GroupLabel>
    </Group>

    <Group $w={303}>
      <GroupBody $pl={8}>
        <Stack>
          <ToolRow $mt={7}>
            <ToolButton $w={22}><LinesIcon kind="top" /></ToolButton>
            <ToolButton $w={22}><LinesIcon kind="middle" /></ToolButton>
            <ToolButton $w={22} $active><LinesIcon kind="bottom" /></ToolButton>
            <RowDivider />
            <ToolButton $w={22}><OrientationIcon /></ToolButton>
            <ToolButton $w={12}><Caret /></ToolButton>
            <RowDivider $l={3} />
            <ToolButton $w={22}><RtlIcon /></ToolButton>
            <ToolButton $w={12}><Caret /></ToolButton>
            <RowDivider />
            <WideTool $w={127}><WrapIcon />Wrap Text</WideTool>
          </ToolRow>
          <ToolRow $mt={8}>
            <ToolButton $w={22}><LinesIcon kind="left" /></ToolButton>
            <ToolButton $w={22}><LinesIcon kind="center" /></ToolButton>
            <ToolButton $w={22}><LinesIcon kind="right" /></ToolButton>
            <RowDivider />
            <ToolButton $w={22}><IndentIcon /></ToolButton>
            <ToolButton $w={22}><IndentIcon right /></ToolButton>
            <ToolButton $w={32} />
            <RowDivider />
            <WideTool $w={127} $active $pl={3} $gap={3}>
              <MergeIcon />Merge &amp; Center
              <Caret $ml={8} />
            </WideTool>
          </ToolRow>
        </Stack>
      </GroupBody>
      <GroupLabel><LabelText>Alignment</LabelText><Launcher><LauncherIcon /></Launcher></GroupLabel>
    </Group>

    <Group $w={147}>
      <GroupBody $pl={8}>
        <Stack>
          <ToolRow $mt={7}>
            <Select $w={131}>Accounting<ChevronDown /></Select>
          </ToolRow>
          <ToolRow $mt={8}>
            <ToolButton $w={22} $size={15}>$</ToolButton>
            <ToolButton $w={10}><Caret /></ToolButton>
            <ToolButton $w={26} $size={15}>%</ToolButton>
            <ToolButton $w={16} $bold $size={14}>,</ToolButton>
            <RowDivider $l={7} $r={7} />
            <ToolButton $w={17}><DecimalIcon /></ToolButton>
            <ToolButton $w={17} $ml={4}><DecimalIcon more /></ToolButton>
          </ToolRow>
        </Stack>
      </GroupBody>
      <GroupLabel><LabelText>Number</LabelText><Launcher><LauncherIcon /></Launcher></GroupLabel>
    </Group>

    <Group $w={188}>
      <GroupBody $pl={8}>
        <BigButton $w={72}>
          <BigIcon $drop={1}><ConditionalIcon /></BigIcon>
          <BigLine>Conditional</BigLine>
          <BigLine>Formatting <Caret /></BigLine>
        </BigButton>
        <BigButton $w={56}>
          <BigIcon $shift={4} $drop={3}><TableBrushIcon /></BigIcon>
          <BigLine>Format as</BigLine>
          <BigLine>Table <Caret /></BigLine>
        </BigButton>
        <BigButton $w={44}>
          <BigIcon $drop={1}><TableBrushIcon cell /></BigIcon>
          <BigLine>Cell</BigLine>
          <BigLine>Styles <Caret /></BigLine>
        </BigButton>
      </GroupBody>
      <GroupLabel><LabelText>Styles</LabelText></GroupLabel>
    </Group>

    <Group $w={143}>
      <GroupBody $pl={7}>
        <BigButton $w={42}>
          <BigIcon $shift={3} $drop={1}><InsertIcon /></BigIcon>
          <BigLine>Insert</BigLine>
          <BigLine><Caret /></BigLine>
        </BigButton>
        <BigButton $w={42}>
          <BigIcon $shift={3} $drop={1}><DeleteIcon /></BigIcon>
          <BigLine>Delete</BigLine>
          <BigLine><Caret /></BigLine>
        </BigButton>
        <BigButton $w={44}>
          <BigIcon><FormatIcon /></BigIcon>
          <BigLine>Format</BigLine>
          <BigLine><Caret /></BigLine>
        </BigButton>
      </GroupBody>
      <GroupLabel><LabelText>Cells</LabelText></GroupLabel>
    </Group>

    <Group $w={137}>
      <GroupBody $pl={4}>
        <SmallColumn $w={40} $pl={6}>
          <SmallItem $gap={9}><SigmaIcon /><Caret /></SmallItem>
          <SmallItem $gap={9}><FillDownIcon /><Caret /></SmallItem>
          <SmallItem $gap={9}><EraserIcon /><Caret /></SmallItem>
        </SmallColumn>
        <BigButton $w={41}>
          <BigIcon><SortFilterIcon /></BigIcon>
          <BigLine>Sort &amp;</BigLine>
          <BigLine>Filter <Caret /></BigLine>
        </BigButton>
        <BigButton $w={44}>
          <BigIcon><FindIcon /></BigIcon>
          <BigLine>Find &amp;</BigLine>
          <BigLine>Select <Caret /></BigLine>
        </BigButton>
      </GroupBody>
      <GroupLabel><LabelText>Editing</LabelText></GroupLabel>
    </Group>

    <Group $w={84}>
      <GroupBody $justify="center">
        <BigButton $w={60}>
          <BigIcon $shift={7} $drop={3}><PdfIcon /></BigIcon>
          <BigLine>Create</BigLine>
          <BigLine>a PDF</BigLine>
        </BigButton>
      </GroupBody>
      <GroupLabel><LabelText>Adobe Acrobat</LabelText></GroupLabel>
    </Group>

    <RibbonEnd>
      <Svg w={10} h={6}><path d="M0 5.5l5-5 5 5" stroke="#666" /></Svg>
    </RibbonEnd>
  </Ribbon>
);

export default function App() {
  return (
    <Window>
      <GlobalStyle />

      <Header>
        <Circuit />
        <TitleRow>
          <Qat>
            <QatSlot $w={16}><SaveIcon /></QatSlot>
            <QatSlot $w={30} $ml={6}><UndoIcon color="#fff" /><Caret $color="#fff" /></QatSlot>
            <QatSlot $w={30} $ml={4}><UndoIcon color="#5f9d7c" flip /><Caret $color="#5f9d7c" /></QatSlot>
            <QatSlot $w={24} $ml={2}><CustomizeIcon /></QatSlot>
          </Qat>
          <DocTitle>Stock Transfer Reconciliation 09-30-2024  -  Excel</DocTitle>
          <UserName>Shamel Layla</UserName>
          <Avatar>SL</Avatar>
          <WinButton $ml={11}><DisplayIcon /></WinButton>
          <WinButton><MinIcon /></WinButton>
          <WinButton><RestoreIcon /></WinButton>
          <WinButton><CloseIcon /></WinButton>
        </TitleRow>
        <TabRow>
          {menuTabs.map(([name, w]) => (
            <RibbonTab key={name} $w={w} $active={name === 'Home'}>{name}</RibbonTab>
          ))}
          <TellMe><BulbIcon />Tell me what you want to do</TellMe>
          <Share><ShareIcon />Share</Share>
        </TabRow>
      </Header>

      <RibbonBar />

      <FormulaBar>
        <NameBox>J2<Caret $color="#777" /></NameBox>
        <Grip>⋮</Grip>
        <FormulaButtons>
          <FormulaSlot><CrossIcon /></FormulaSlot>
          <FormulaSlot><CheckIcon /></FormulaSlot>
          <FormulaSlot>fx</FormulaSlot>
        </FormulaButtons>
        <FormulaInput><ChevronDown color="#777" w={9} /></FormulaInput>
      </FormulaBar>

      <Sheet>
        <SheetGrid $cols={columns.map(([, w]) => `${w}px`).join(' ')}>
          <Corner />
          {columns.map(([id], i) => (
            <ColHead key={i} $selected={id === 'J'}>{id}</ColHead>
          ))}
          <SheetCells />
        </SheetGrid>
        <VScroll>
          <ScrollArrow><Triangle $up /></ScrollArrow>
          <VThumb />
          <ScrollArrow $mt={434}><Triangle /></ScrollArrow>
        </VScroll>

        <StoreSlicer
          left={28}
          w={151}
          h={408}
          pr={9}
          titleW={82}
          bodyH={368}
          thumbGap={46}
          items={storeOne}
          tail={(
            <>
              <SlicerItem $dim>(blank)</SlicerItem>
              <SlicerItem $dim />
            </>
          )}
        />
        <StoreSlicer
          left={183}
          w={172}
          h={411}
          pr={8}
          titleW={104}
          bodyH={372}
          thumbGap={15}
          items={storeTwo}
        />
        <Selection />
      </Sheet>

      <TabsBar>
        <NavArrows><NavArrow /><NavArrow $right /></NavArrows>
        <TabDivider $mr={0} />
        <SheetTab $w={71} $plain>Sheet19</SheetTab>
        <TabDivider />
        <SheetTab $w={86} $bg="#ffff00">GIMA Data</SheetTab>
        <TabDivider $clear />
        <SheetTab $w={159} $active $bg="linear-gradient(#fff, #ffffcc)">Gima Store Wise Reco</SheetTab>
        <SheetTab $w={238} $plain $track={0.3}>JDE Store Wise Reco+JDE GIMA Re</SheetTab>
        <TabDivider />
        <SheetTab $w={75} $bg="#92d050">JDE Data</SheetTab>
        <TabDivider $ml={2} />
        <TabExtra $w={40} $color="#0f5c33" $bold>...</TabExtra>
        <TabExtra $w={14}><PlusCircleIcon /></TabExtra>
        <TabExtra $w={39} $color="#a6a6a6">⋮</TabExtra>
        <HScroll>
          <HArrow $w={14}><NavArrow /></HArrow>
          <HThumb />
          <HTrack />
          <HArrow $w={14}><NavArrow $right /></HArrow>
        </HScroll>
      </TabsBar>

      <StatusBar>
        <MacroSlot><MacroIcon /></MacroSlot>
        <StatusText $w={93}>Average:  (0.00)</StatusText>
        <StatusText $w={66}>Count: 50</StatusText>
        <StatusText $w={77}>Sum:  (0.00)</StatusText>
        <ViewButton $w={40} $active><NormalViewIcon /></ViewButton>
        <ViewButton $w={40}><PageViewIcon /></ViewButton>
        <ViewButton $w={41}><BreakViewIcon /></ViewButton>
        <StatusText $w={10} $ml={6}>−</StatusText>
        <ZoomTrack><ZoomThumb /></ZoomTrack>
        <StatusText $w={21}>+</StatusText>
        <StatusText $w={30}>100%</StatusText>
      </StatusBar>

      <Watermark>
        <WatermarkAr lang="ar" dir="rtl">مستقل</WatermarkAr>
        <WatermarkEn>mostaql.com</WatermarkEn>
      </Watermark>
    </Window>
  );
}
